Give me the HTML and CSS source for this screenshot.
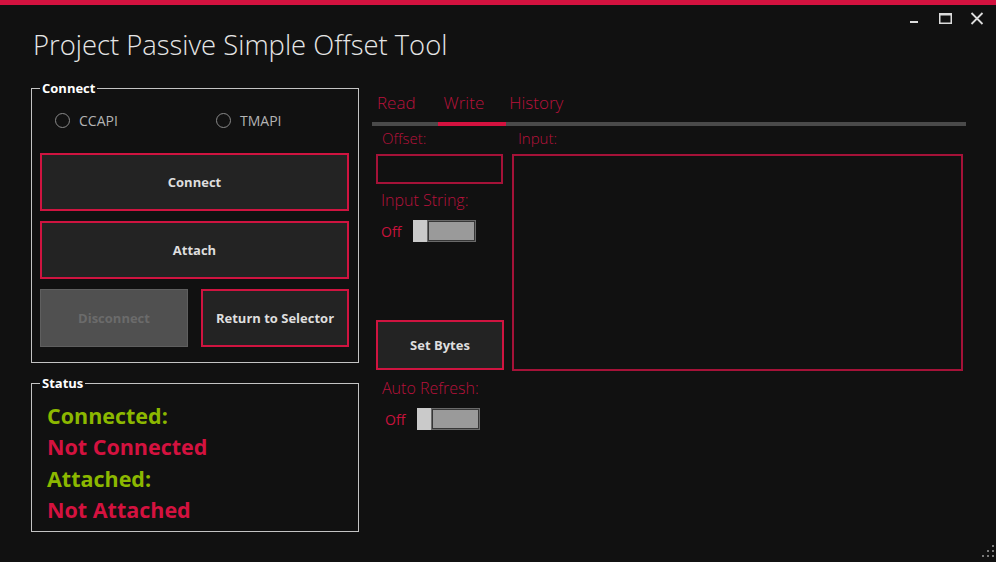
FILE: index.html
```html
<!DOCTYPE html>
<html>
<head>
<meta charset="utf-8">
<link rel="stylesheet" href="styles.css">
</head>
<body>
<div class="app">
  <div class="topbar"></div>
  <div class="titlebar">
    <h1 class="title">Project Passive Simple Offset Tool</h1>
    <div class="winctl">
      <svg class="winbtn" viewBox="0 0 31 26"><rect x="11" y="16" width="8" height="2" fill="#dcdcdc"/></svg>
      <svg class="winbtn" viewBox="0 0 31 26"><rect x="9.75" y="8.75" width="11.5" height="9.5" fill="none" stroke="#dcdcdc" stroke-width="1.5"/><rect x="9" y="8" width="13" height="2.5" fill="#dcdcdc"/></svg>
      <svg class="winbtn" viewBox="0 0 31 26"><path d="M10.5 8 L21.5 19 M21.5 8 L10.5 19" stroke="#dcdcdc" stroke-width="1.8"/></svg>
    </div>
  </div>
  <div class="content">
    <div class="leftcol">
      <div class="group connect">
        <span class="group-label">Connect</span>
        <div class="radios">
          <div class="radio radio-first"><span class="radio-dot"></span>CCAPI</div>
          <div class="radio"><span class="radio-dot"></span>TMAPI</div>
        </div>
        <div class="btns">
          <div class="btn">Connect</div>
          <div class="btn">Attach</div>
          <div class="btn-row">
            <div class="btn disabled">Disconnect</div>
            <div class="btn">Return to Selector</div>
          </div>
        </div>
      </div>
      <div class="group status">
        <span class="group-label">Status</span>
        <div class="status-line ok">Connected:</div>
        <div class="status-line bad">Not Connected</div>
        <div class="status-line ok">Attached:</div>
        <div class="status-line bad">Not Attached</div>
      </div>
    </div>
    <div class="rightcol">
      <div class="tabs">
        <div class="tab">Read</div>
        <div class="tab active">Write</div>
        <div class="tab tab-last">History</div>
        <div class="tab-fill"></div>
      </div>
      <div class="write">
        <div class="wleft">
          <div class="flabel">Offset:</div>
          <div class="offset-box"></div>
          <div class="flabel flabel-lg mt-input">Input String:</div>
          <div class="toggle-row">
            <span class="off">Off</span>
            <div class="toggle"><span class="thumb"></span><span class="track"></span></div>
          </div>
          <div class="btn setbytes">Set Bytes</div>
          <div class="flabel flabel-lg mt-auto">Auto Refresh:</div>
          <div class="toggle-row toggle-row2">
            <span class="off">Off</span>
            <div class="toggle"><span class="thumb"></span><span class="track"></span></div>
          </div>
        </div>
        <div class="wright">
          <div class="flabel">Input:</div>
          <div class="input-box"></div>
        </div>
      </div>
    </div>
  </div>
  <svg class="grip" viewBox="0 0 16 16" width="16" height="16">
    <rect x="12" y="2" width="2" height="2" fill="#7a7a7a"/>
    <rect x="7" y="7" width="2" height="2" fill="#7a7a7a"/>
    <rect x="12" y="7" width="2" height="2" fill="#7a7a7a"/>
    <rect x="2" y="12" width="2" height="2" fill="#7a7a7a"/>
    <rect x="7" y="12" width="2" height="2" fill="#7a7a7a"/>
    <rect x="12" y="12" width="2" height="2" fill="#7a7a7a"/>
  </svg>
</div>
</body>
</html>
```
FILE: styles.css
```css
* { box-sizing: border-box; }
body { margin: 0; background: #111111; font-family: "Open Sans", "Noto Sans", sans-serif; }
.app { width: 996px; height: 562px; position: relative; overflow: hidden; background: #111111; }
.topbar { height: 5px; background: #d3123f; }
.titlebar { display: flex; justify-content: space-between; align-items: flex-start; height: 83px; }
.title { margin: 0; padding: 21px 0 0 33px; font-weight: 300; font-size: 27.4px; line-height: 38px; color: #e6e6e6; }
.winctl { display: flex; padding-right: 4px; }
.winbtn { width: 31px; height: 26px; display: block; }

.content { display: flex; padding-left: 31px; }
.leftcol { width: 328px; display: flex; flex-direction: column; gap: 20px; }
.group { position: relative; border: 1px solid #c4c4c4; }
.group-label { position: absolute; top: -10px; left: 8px; padding: 0 2px; background: #111111; color: #ffffff; font-weight: 700; font-size: 13px; line-height: 18px; }
.connect { height: 275px; padding: 0 9px 0 8px; }
.radios { display: flex; height: 64px; align-items: center; padding: 0 0 2px 15px; }
.radio { display: flex; align-items: center; gap: 9px; color: #b4b4b4; font-size: 14px; }
.radio-first { width: 161px; flex-shrink: 0; }
.radio-dot { width: 15px; height: 15px; border: 1.5px solid #8a8a8a; border-radius: 50%; }
.btns { display: flex; flex-direction: column; gap: 10px; }
.btn { height: 58px; background: #232323; border: 2px solid #cf1440; color: #dedede; font-weight: 700; font-size: 13px; display: flex; align-items: center; justify-content: center; }
.btn-row { display: grid; grid-template-columns: 1fr 1fr; gap: 13px; }
.btn.disabled { background: #505050; border: 1px solid #5f5f5f; color: #6b6b6b; }
.status { height: 149px; padding: 16px 0 0 15px; }
.status-line { font-size: 21.5px; font-weight: 700; line-height: 31.3px; }
.ok { color: #8cb800; }
.bad { color: #d4123f; }

.rightcol { width: 594px; margin-left: 13px; }
.tabs { display: flex; height: 38px; }
.tab { padding: 0 22px 0 5px; border-bottom: 4px solid #4a4a4a; font-size: 17px; font-weight: 300; color: #b8123c; line-height: 30px; }
.tab.active { border-bottom-color: #d3123f; padding-left: 6px; }
.tab-last { padding-left: 3px; padding-right: 0; }
.tab-fill { flex: 1; border-bottom: 4px solid #4a4a4a; }

.write { display: grid; grid-template-columns: 127px 451px; column-gap: 9px; padding-left: 4px; }
.wleft, .wright { display: flex; flex-direction: column; }
.flabel { font-size: 15px; font-weight: 300; color: #b8123c; line-height: 24px; padding-left: 6px; }
.flabel-lg { font-size: 16px; padding-left: 5px; }
.mt-input { margin-top: 4px; }
.mt-auto { margin-top: 6px; padding-left: 6px; }
.offset-box { height: 30px; margin-top: 4px; border: 2px solid #a51238; }
.input-box { height: 217px; margin-top: 4px; border: 2px solid #a51238; }
.toggle-row { display: flex; align-items: center; margin-top: 8px; padding-left: 5px; }
.toggle-row2 { padding-left: 9px; }
.off { width: 32px; color: #c8123c; font-size: 14px; }
.toggle { display: flex; width: 63px; height: 22px; }
.thumb { width: 14px; background: #cacaca; }
.track { flex: 1; border: 1px solid #6a6a6a; background: #9a9a9a; box-shadow: inset 0 0 0 1px #363636; }
.setbytes { height: 50px; margin-top: 78px; width: 128px; }

.grip { position: absolute; right: 0; bottom: 3px; }
```
